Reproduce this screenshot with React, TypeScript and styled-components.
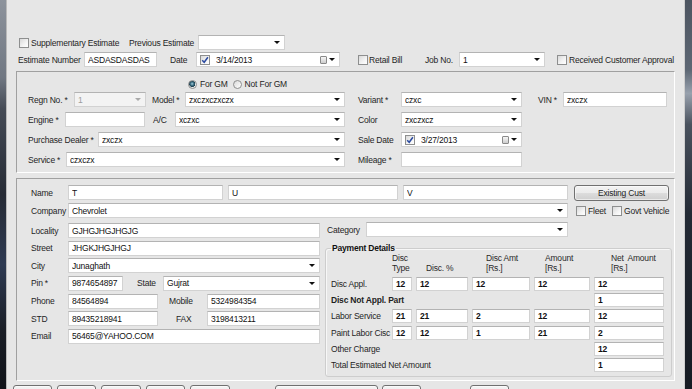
import React from "react";
import styled, { createGlobalStyle, css } from "styled-components";

const Global = createGlobalStyle`
  html, body { margin: 0; padding: 0; overflow: hidden; background: #e6e6e6; }
  body {
    font-family: "Liberation Sans", Arial, sans-serif;
    font-size: 8.5px;
    letter-spacing: -0.2px;
    color: #1f1f1f;
  }
  * { box-sizing: border-box; }
`;

const Screen = styled.div`
  display: flex;
  width: 692px;
  height: 389px;
  overflow: hidden;
  background: #e6e6e6;
`;

const LeftFrame = styled.div`
  flex: none;
  width: 7px;
  border-right: 1px solid #b9b9b9;
  background: linear-gradient(
    to bottom,
    #8d939c 0%,
    #707782 20%,
    #454b56 28%,
    #262b35 50%,
    #2e3a52 68%,
    #1a1e26 85%,
    #101319 100%
  );
`;

const RightFrame = styled.div`
  flex: none;
  width: 8px;
  border-left: 1px solid #cfcfcf;
  background: linear-gradient(
    to bottom,
    #4d5561 0%,
    #5d6774 18%,
    #98a1ad 24%,
    #4a525e 32%,
    #232a35 55%,
    #161b23 100%
  );
`;

const Form = styled.div`
  flex: 1;
  min-width: 0;
  display: flex;
  flex-direction: column;
  padding-top: 35px;
`;

const Row = styled.div<{ $h?: number; $pl?: number; $mt?: number }>`
  flex: none;
  display: flex;
  align-items: center;
  height: ${(p) => p.$h ?? 15}px;
  padding-left: ${(p) => p.$pl ?? 0}px;
  margin-top: ${(p) => p.$mt ?? 0}px;
`;

const Group = styled.div<{ $w?: number; $ml?: number }>`
  flex: none;
  display: flex;
  align-items: center;
  height: 100%;
  ${(p) => p.$w != null && css`width: ${p.$w}px;`}
  margin-left: ${(p) => p.$ml ?? 0}px;
`;

const Lbl = styled.span<{ $w?: number; $ml?: number; $bold?: boolean }>`
  flex: none;
  white-space: nowrap;
  ${(p) => p.$w != null && css`width: ${p.$w}px;`}
  margin-left: ${(p) => p.$ml ?? 0}px;
  font-weight: ${(p) => (p.$bold ? 700 : 400)};
`;

const Box = styled.div<{ $w: number; $ml?: number; $disabled?: boolean; $h?: number }>`
  flex: none;
  display: flex;
  align-items: center;
  width: ${(p) => p.$w}px;
  height: ${(p) => p.$h ?? 15}px;
  margin-left: ${(p) => p.$ml ?? 0}px;
  padding: 0 2px 0 3px;
  background: ${(p) => (p.$disabled ? "#f3f3f3" : "#ffffff")};
  border: 1px solid #d2d2d2;
  border-top-color: #b3b3b3;
  color: ${(p) => (p.$disabled ? "#9c9c9c" : "#111111")};
  white-space: nowrap;
  overflow: hidden;
`;

const Val = styled.span<{ $bold?: boolean }>`
  flex: 1;
  min-width: 0;
  overflow: hidden;
  font-weight: ${(p) => (p.$bold ? 700 : 400)};
`;

const Arrow = styled.span<{ $disabled?: boolean }>`
  flex: none;
  width: 0;
  height: 0;
  margin-right: 2px;
  border-left: 3px solid transparent;
  border-right: 3px solid transparent;
  border-top: 3px solid ${(p) => (p.$disabled ? "#a9a9a9" : "#111")};
`;

const CalIcon = styled.span`
  flex: none;
  width: 7px;
  height: 8px;
  margin-right: 2px;
  border: 1px solid #8a8a8a;
  border-radius: 1px;
  background: linear-gradient(to bottom, #f6f6f6, #cdcdcd);
`;

const CheckBox = styled.span<{ $ml?: number }>`
  flex: none;
  display: inline-flex;
  align-items: center;
  justify-content: center;
  width: 10px;
  height: 10px;
  margin-left: ${(p) => p.$ml ?? 0}px;
  border: 1px solid #8e8f8f;
  background: linear-gradient(135deg, #d9d9d9 0%, #f4f4f4 60%, #ffffff 100%);
`;

const RadioDot = styled.span<{ $on?: boolean; $ml?: number }>`
  flex: none;
  width: 9px;
  height: 9px;
  margin-left: ${(p) => p.$ml ?? 0}px;
  border-radius: 50%;
  border: 1px solid #8e8f8f;
  background: ${(p) =>
    p.$on
      ? "radial-gradient(circle at 45% 40%, #a9d0de 0, #3f7388 28%, #1d3d4c 52%, #e4e4e4 58%, #ffffff 100%)"
      : "linear-gradient(135deg, #d9d9d9, #ffffff)"};
`;

const Panel = styled.div<{ $h: number; $mt: number; $pt: number; $pl: number }>`
  flex: none;
  display: flex;
  flex-direction: column;
  width: 659px;
  height: ${(p) => p.$h}px;
  margin: ${(p) => p.$mt}px 0 0 9px;
  padding: ${(p) => p.$pt}px 0 0 ${(p) => p.$pl}px;
  border-top: 1px solid #a0a0a0;
  border-left: 1px solid #a0a0a0;
  border-right: 1px solid #ffffff;
  border-bottom: 1px solid #ffffff;
`;

const Stack = styled.div<{ $gap: number; $pt?: number }>`
  display: flex;
  flex-direction: column;
  gap: ${(p) => p.$gap}px;
  padding-top: ${(p) => p.$pt ?? 0}px;
`;

const WinButton = styled.button<{ $w: number; $ml?: number; $h?: number }>`
  flex: none;
  width: ${(p) => p.$w}px;
  height: ${(p) => p.$h ?? 24}px;
  margin-left: ${(p) => p.$ml ?? 0}px;
  padding: 0;
  border: 1px solid #707070;
  border-radius: 3px;
  background: linear-gradient(to bottom, #f3f3f3 0%, #ebebeb 48%, #dcdcdc 52%, #cfcfcf 100%);
  box-shadow: inset 0 0 0 1px rgba(255, 255, 255, 0.55);
  font: inherit;
  letter-spacing: inherit;
  color: #1f1f1f;
`;

const CustBody = styled.div`
  display: grid;
  grid-template-columns: 289px 346px;
  column-gap: 6px;
  margin-top: 4px;
`;

const PayGroup = styled.fieldset`
  margin: 6px 0 0 -1px;
  width: 347px;
  padding: 0 6px 4px 5px;
  border: 1px solid #cdcdcd;
  border-radius: 3px;
  box-shadow: inset 1px 1px 0 #f7f7f7;
`;

const PayLegend = styled.legend`
  padding: 0 1px;
  font-weight: 700;
  line-height: 10px;
  color: #111;
`;

const payCols = css`
  display: grid;
  grid-template-columns: 57px 20px 52px 58px 56px 70px;
  column-gap: 4px;
`;

const PayHead = styled.div`
  ${payCols};
  height: 20px;
  margin-bottom: 4px;
  line-height: 10px;
`;

const HeadCell = styled.div<{ $col: number; $pl?: number }>`
  grid-column: ${(p) => p.$col};
  align-self: end;
  padding-left: ${(p) => p.$pl ?? 0}px;
  white-space: pre;
  color: #2a2a2a;
`;

const PayGrid = styled.div`
  ${payCols};
  grid-auto-rows: 14px;
  row-gap: 2.2px;
`;

const PayLbl = styled.div<{ $span?: number; $bold?: boolean }>`
  grid-column: span ${(p) => p.$span ?? 1};
  display: flex;
  align-items: center;
  white-space: nowrap;
  font-weight: ${(p) => (p.$bold ? 700 : 400)};
`;

const NumBox = styled.div`
  display: flex;
  align-items: center;
  padding-left: 3px;
  background: #ffffff;
  border: 1px solid #d2d2d2;
  border-top-color: #b3b3b3;
  font-weight: 700;
  color: #111;
  white-space: nowrap;
  overflow: hidden;
`;

const Tick = () => (
  <svg width="8" height="8" viewBox="0 0 8 8">
    <path d="M1.2 4.2 L3.2 6.3 L6.9 1.2" fill="none" stroke="#2b4aa0" strokeWidth="1.5" />
  </svg>
);

const Check = ({ on, ml }: { on?: boolean; ml?: number }) => (
  <CheckBox $ml={ml}>{on ? <Tick /> : null}</CheckBox>
);

const Combo = ({ w, v, ml, disabled }: { w: number; v?: string; ml?: number; disabled?: boolean }) => (
  <Box $w={w} $ml={ml} $disabled={disabled}>
    <Val>{v}</Val>
    <Arrow $disabled={disabled} />
  </Box>
);

const Text = ({ w, v, ml }: { w: number; v?: string; ml?: number }) => (
  <Box $w={w} $ml={ml}>
    <Val>{v}</Val>
  </Box>
);

const DatePick = ({ w, v }: { w: number; v: string }) => (
  <Box $w={w} $ml={0}>
    <Check on />
    <Val style={{ marginLeft: 6 }}>{v}</Val>
    <CalIcon />
    <Arrow />
  </Box>
);

const payRows: { label: string; vals: string[] }[] = [
  { label: "Labor Service", vals: ["21", "21", "2", "12", "12"] },
  { label: "Paint Labor Cisc", vals: ["12", "12", "1", "21", "2"] },
];

export default function App() {
  return (
    <>
      <Global />
      <Screen>
        <LeftFrame />
        <Form>
          <Row $pl={12}>
            <Check />
            <Lbl $ml={2} $w={98}>Supplementary Estimate</Lbl>
            <Lbl $w={69}>Previous Estimate</Lbl>
            <Combo w={87} />
          </Row>

          <Row $pl={11} $mt={2}>
            <Lbl $w={66}>Estimate Number</Lbl>
            <Text w={73} v="ASDASDASDAS" />
            <Lbl $ml={13} $w={26}>Date</Lbl>
            <DatePick w={144} v="3/14/2013" />
            <Check ml={18} />
            <Lbl $ml={1} $w={56}>Retail Bill</Lbl>
            <Lbl $w={34}>Job No.</Lbl>
            <Combo w={86} v="1" />
            <Check ml={12} />
            <Lbl $ml={2}>Received Customer Approval</Lbl>
          </Row>

          <Panel $h={102} $mt={4} $pt={7} $pl={11}>
            <Row $h={10}>
              <RadioDot $on $ml={160} />
              <Lbl $ml={3}>For GM</Lbl>
              <RadioDot $ml={5} />
              <Lbl $ml={3}>Not For GM</Lbl>
            </Row>
            <Stack $gap={5} $pt={3}>
              <Row>
                <Group $w={317}>
                  <Lbl $w={46}>Regn No. *</Lbl>
                  <Combo w={72} v="1" disabled />
                  <Lbl $ml={6} $w={33}>Model *</Lbl>
                  <Combo w={160} v="zxczxczxczx" />
                </Group>
                <Group $ml={13}>
                  <Lbl $w={43}>Variant *</Lbl>
                  <Combo w={121} v="czxc" />
                  <Lbl $ml={16} $w={25}>VIN *</Lbl>
                  <Text w={104} v="zxczx" />
                </Group>
              </Row>
              <Row>
                <Group $w={317}>
                  <Lbl $w={37}>Engine *</Lbl>
                  <Text w={80} />
                  <Lbl $ml={8} $w={22}>A/C</Lbl>
                  <Combo w={170} v="xczxc" />
                </Group>
                <Group $ml={13}>
                  <Lbl $w={43}>Color</Lbl>
                  <Combo w={121} v="zxczxcz" />
                </Group>
              </Row>
              <Row>
                <Group $w={317}>
                  <Lbl $w={70}>Purchase Dealer *</Lbl>
                  <Combo w={247} v="zxczx" />
                </Group>
                <Group $ml={13}>
                  <Lbl $w={43}>Sale Date</Lbl>
                  <DatePick w={121} v="3/27/2013" />
                </Group>
              </Row>
              <Row>
                <Group $w={317}>
                  <Lbl $w={38}>Service *</Lbl>
                  <Combo w={279} v="czxczx" />
                </Group>
                <Group $ml={13}>
                  <Lbl $w={43}>Mileage *</Lbl>
                  <Text w={121} />
                </Group>
              </Row>
            </Stack>
          </Panel>

          <Panel $h={203} $mt={5} $pt={6} $pl={14}>
            <Row>
              <Lbl $w={37}>Name</Lbl>
              <Text w={155} v="T" />
              <Text w={170} ml={5} v="U" />
              <Text w={165} ml={5} v="V" />
              <WinButton $w={95} $h={16} $ml={6}>Existing Cust</WinButton>
            </Row>
            <Row $mt={3}>
              <Lbl $w={37}>Company</Lbl>
              <Combo w={500} v="Chevrolet" />
              <Check ml={8} />
              <Lbl $ml={2} $w={23}>Fleet</Lbl>
              <Check ml={1} />
              <Lbl $ml={2}>Govt Vehicle</Lbl>
            </Row>

            <CustBody>
              <Stack $gap={2.67} $pt={1}>
                <Row>
                  <Lbl $w={37}>Locality</Lbl>
                  <Text w={252} v="GJHGJHGJHGJG" />
                </Row>
                <Row>
                  <Lbl $w={37}>Street</Lbl>
                  <Text w={252} v="JHGKJHGJHGJ" />
                </Row>
                <Row>
                  <Lbl $w={37}>City</Lbl>
                  <Combo w={252} v="Junaghath" />
                </Row>
                <Row>
                  <Lbl $w={37}>Pin *</Lbl>
                  <Text w={55} v="9874654897" />
                  <Lbl $ml={14} $w={26}>State</Lbl>
                  <Combo w={157} v="Gujrat" />
                </Row>
                <Row>
                  <Lbl $w={37}>Phone</Lbl>
                  <Text w={90} v="84564894" />
                  <Lbl $ml={11} $w={38}>Mobile</Lbl>
                  <Text w={113} v="5324984354" />
                </Row>
                <Row>
                  <Lbl $w={37}>STD</Lbl>
                  <Text w={90} v="89435218941" />
                  <Lbl $ml={18} $w={31}>FAX</Lbl>
                  <Text w={113} v="3198413211" />
                </Row>
                <Row>
                  <Lbl $w={37}>Email</Lbl>
                  <Text w={252} v="56465@YAHOO.COM" />
                </Row>
              </Stack>

              <div>
                <Row>
                  <Lbl $ml={1} $w={39}>Category</Lbl>
                  <Combo w={202} />
                </Row>
                <PayGroup>
                  <PayLegend>Payment Details</PayLegend>
                  <PayHead>
                    <HeadCell $col={2}>{"Disc\nType"}</HeadCell>
                    <HeadCell $col={3} $pl={10}>Disc. %</HeadCell>
                    <HeadCell $col={4} $pl={14}>{"Disc Amt\n[Rs.]"}</HeadCell>
                    <HeadCell $col={5} $pl={11}>{"Amount\n[Rs.]"}</HeadCell>
                    <HeadCell $col={6} $pl={17}>{"Net  Amount\n[Rs.]"}</HeadCell>
                  </PayHead>
                  <PayGrid>
                    <PayLbl>Disc Appl.</PayLbl>
                    {["12", "12", "12", "12", "12"].map((v, i) => (
                      <NumBox key={i}>{v}</NumBox>
                    ))}
                    <PayLbl $span={5} $bold>Disc Not Appl. Part</PayLbl>
                    <NumBox>1</NumBox>
                    {payRows.map((r) => (
                      <React.Fragment key={r.label}>
                        <PayLbl>{r.label}</PayLbl>
                        {r.vals.map((v, i) => (
                          <NumBox key={i}>{v}</NumBox>
                        ))}
                      </React.Fragment>
                    ))}
                    <PayLbl $span={5}>Other Charge</PayLbl>
                    <NumBox>12</NumBox>
                    <PayLbl $span={5}>Total Estimated Net Amount</PayLbl>
                    <NumBox>1</NumBox>
                  </PayGrid>
                </PayGroup>
              </div>
            </CustBody>
          </Panel>

          <Row $h={24} $pl={6} $mt={4}>
            <WinButton $w={39} />
            <WinButton $w={39} $ml={5} />
            <WinButton $w={40} $ml={5} />
            <WinButton $w={39} $ml={5} />
            <WinButton $w={40} $ml={5} />
            <WinButton $w={103} $ml={45} />
            <WinButton $w={39} $ml={4} />
            <WinButton $w={39} $ml={49} />
          </Row>
        </Form>
        <RightFrame />
      </Screen>
    </>
  );
}
